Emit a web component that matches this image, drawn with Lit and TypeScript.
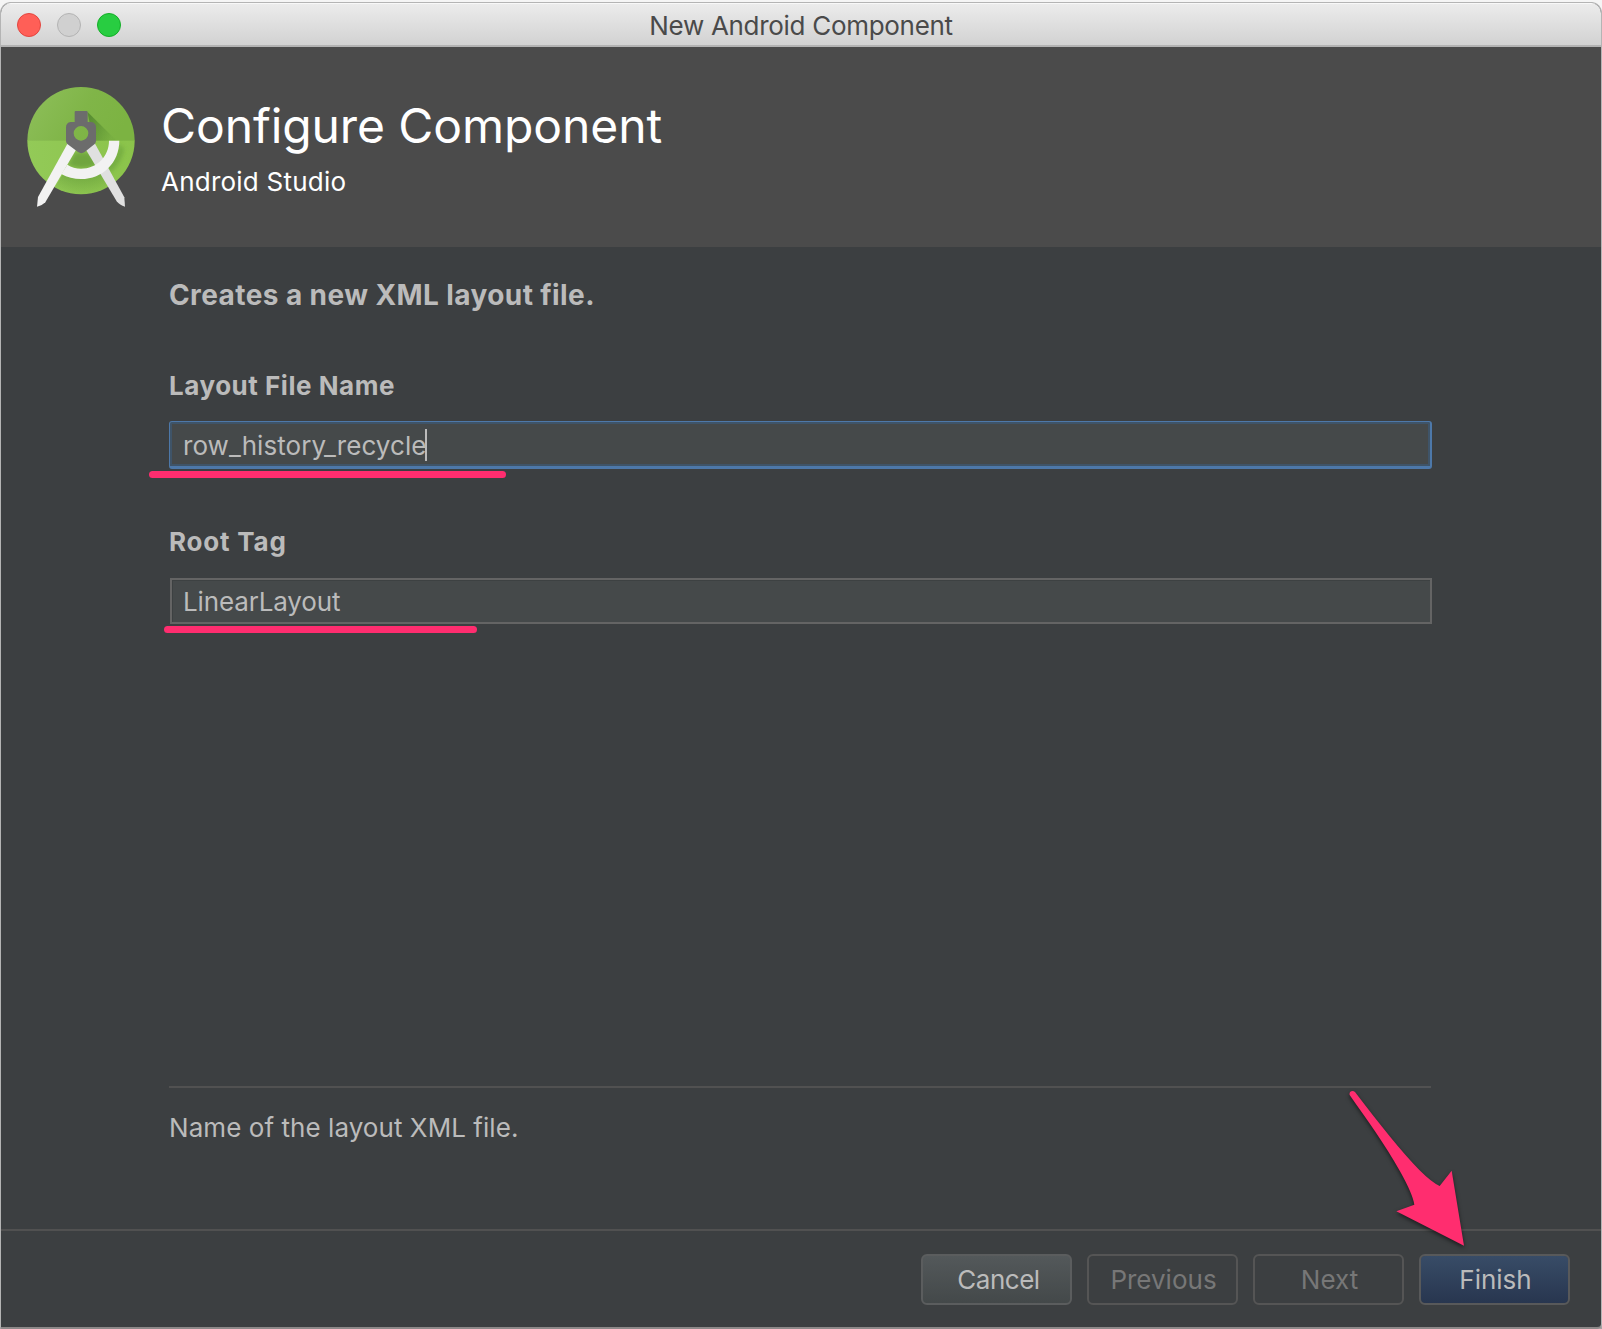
import { LitElement, html, svg, css } from "lit";
import { customElement, property } from "lit/decorators.js";
import { classMap } from "lit/directives/class-map.js";

@customElement("wizard-button")
class WizardButton extends LitElement {
  @property() label = "";
  @property() kind: "normal" | "disabled" | "primary" = "normal";

  static styles = css`
    :host { display: block; }
    .btn {
      box-sizing: border-box;
      display: flex;
      align-items: center;
      justify-content: center;
      width: 151px;
      height: 51px;
      margin: 0;
      padding: 0 0 1px 2px;
      border: 2px solid #57595a;
      border-radius: 6px;
      background: transparent;
      color: #bbbbbb;
      font: 400 26px/31px Inter, "Liberation Sans", sans-serif;
    }
    .normal { background: linear-gradient(#54595b, #434849) border-box; border-color: #5b5d5e; letter-spacing: -0.5px; padding-left: 4px; }
    .disabled { color: #777777; border-color: #555555; }
    .primary { background: linear-gradient(#384c67, #28364f) padding-box; border-color: #58595a; }
  `;

  render() {
    return html`<button
      class=${classMap({ btn: true, [this.kind]: true })}
      ?disabled=${this.kind === "disabled"}
    >${this.label}</button>`;
  }
}

@customElement("studio-logo")
class StudioLogo extends LitElement {
  static styles = css`:host, svg { display: block; }`;

  render() {
    return html`<svg width="130" height="140" viewBox="0 0 390 420">
      <defs>
        <linearGradient id="top" x1="0" y1="0" x2="1" y2="0.3">
          <stop offset="0" stop-color="#8fc05c" />
          <stop offset="0.6" stop-color="#80b548" />
          <stop offset="1" stop-color="#7cb342" />
        </linearGradient>
        <linearGradient id="low" x1="0" y1="0" x2="1" y2="0">
          <stop offset="0" stop-color="#93ca58" />
          <stop offset="1" stop-color="#8bc34a" />
        </linearGradient>
        <linearGradient id="shade" gradientUnits="userSpaceOnUse" x1="215" y1="150" x2="290" y2="185">
          <stop offset="0" stop-color="#33691e" stop-opacity="0.5" />
          <stop offset="1" stop-color="#33691e" stop-opacity="0.05" />
        </linearGradient>
        <radialGradient id="shadeLow" gradientUnits="userSpaceOnUse" cx="198" cy="200" r="160">
          <stop offset="0.3" stop-color="#33691e" stop-opacity="0.55" />
          <stop offset="1" stop-color="#33691e" stop-opacity="0.02" />
        </radialGradient>
        <clipPath id="disc"><circle cx="198" cy="197" r="161" /></clipPath>
        <filter id="soft" x="-20%" y="-20%" width="140%" height="140%"><feGaussianBlur stdDeviation="6" /></filter>
      </defs>
      <g clip-path="url(#disc)">
        <rect x="30" y="30" width="340" height="168" fill="url(#top)" />
        <rect x="30" y="197" width="340" height="170" fill="url(#low)" />
        <path d="M217 110 L305 197 H235 Z" fill="url(#shade)" />
        <path d="M180 232 L222 232 L250 268 Q200 290 158 270 Z" fill="#558b2f" fill-opacity="0.55" filter="url(#soft)" />
        <path d="M142 300 Q215 325 265 290 L310 370 H100 Z" fill="url(#shadeLow)" />
        <path d="M313 205 L328 222 Q318 270 284 294 L270 270 Q312 240 313 205 Z" fill="#558b2f" fill-opacity="0.4" filter="url(#soft)" />
      </g>
      <path d="M212 223 L239 204 L328 367 L330 395 Q314 391 305 379 Z" fill="#e0e0e0" />
      <path d="M282 197 H313 C313 262 264 312 198 312 C177 312 157 307 139 297 L157 269 C169 277 183 281 198 281 C245 281 282 244 282 197 Z" fill="#f2f2f2" />
      <path d="M159 203 L184 223 L91 382 Q82 392 66 395 L69 366 Z" fill="#f2f2f2" />
      <path fill-rule="evenodd" fill="#6c6c6c" d="M182 108 H214 Q218 108 218 112 V141 H229 Q243 143 243 157 V198 Q243 203 239 207 L209 231 Q199 238 189 231 L157 207 Q153 203 153 198 V157 Q153 143 167 141 H179 V112 Q179 108 182 108 Z M198 153 A22 22 0 1 0 198 197 A22 22 0 1 0 198 153 Z" />
    </svg>`;
  }
}

@customElement("app-root")
class AppRoot extends LitElement {
  static styles = css`
    :host {
      display: block;
      width: 1602px;
      height: 1329px;
      overflow: hidden;
      background: #f3f3f3;
      font-family: Inter, "Liberation Sans", sans-serif;
      font-size: 26px;
      line-height: 31px;
      color: #bbbbbb;
    }
    .page { box-sizing: border-box; height: 1329px; padding-top: 2px; background: linear-gradient(#f5f5f5 0 20px, #a5a3a3 60px); }
    .window {
      position: relative;
      box-sizing: border-box;
      height: 1327px;
      border: 1px solid #b4b4b4;
      border-width: 1px 1px 2px;
      border-bottom-color: #8d8989;
      border-radius: 11px 11px 5px 2px;
      background: #3c3f41;
      overflow: hidden;
      display: flex;
      flex-direction: column;
    }
    .titlebar {
      box-sizing: border-box;
      flex: none;
      display: grid;
      grid-template-columns: 1fr auto 1fr;
      height: 44px;
      background: linear-gradient(#ececec, #d2d2d2);
      box-shadow: inset 0 1px #f8f8f8;
      border-bottom: 2px solid #b3b3b3;
    }
    .lights { display: flex; gap: 16px; padding: 10px 0 0 16px; }
    .light { box-sizing: border-box; width: 24px; height: 24px; border-radius: 50%; border: 1px solid; }
    .close { background: #ff5f57; border-color: #e2463f; }
    .mini { background: #d0d0d0; border-color: #b3b3b3; }
    .zoom { background: #28cd41; border-color: #14ae28; }
    .title { padding-top: 7px; color: #4a4a4a; letter-spacing: -0.3px; white-space: nowrap; }
    .header { flex: none; height: 200px; display: flex; background: #4b4b4b; color: #ffffff; }
    .logo { padding: 28px 14px 0 14px; }
    .headings { padding: 49px 0 0 2px; }
    .h1 { font-size: 48px; line-height: 59px; letter-spacing: -0.08px; font-weight: 400; margin: 0 0 11px; }
    .sub { letter-spacing: 0.23px; }
    .form { flex: 1; display: flex; flex-direction: column; padding: 31px 168px 0; }
    .intro { font-weight: 700; font-size: 28px; line-height: 34px; letter-spacing: 0.41px; }
    .label { margin: 58px 0 20px; font-weight: 700; letter-spacing: 0.53px; }
    .label.root { margin: 57px 0 21px; letter-spacing: 0.8px; }
    .field { position: relative; box-sizing: border-box; display: flex; background: #45494a; }
    .field.focus {
      height: 48px;
      margin-right: 1px;
      border: 1px solid #4d78a9;
      border-width: 1px 2px 3px 1px;
      border-radius: 3px;
      box-shadow: inset 0 0 0 2px #3f5468;
      padding: 8px 0 0 13px;
      letter-spacing: 0.05px;
    }
    .field.plain {
      height: 46px;
      margin: 0 1px 0 1px;
      border: 2px solid #646464;
      box-shadow: inset 1px 1px #3d4142;
      padding: 6px 0 0 11px;
      letter-spacing: -0.14px;
    }
    .caret { width: 2px; height: 32px; margin: -1px 0 0 -1px; background: #bbbbbb; }
    .mark { position: absolute; height: 6.6px; border-radius: 4px; background: #ff2d6f; }
    .m1 { left: -21px; top: 49.3px; width: 357px; }
    .m2 { left: -8px; top: 46px; width: 313px; }
    .hint { margin: auto 2px 86px 0; padding-top: 24px; border-top: 2px solid #515151; letter-spacing: 0.06px; }
    .footer {
      flex: none;
      box-sizing: border-box;
      height: 98px;
      border-top: 2px solid #515151;
      padding: 23px 31px 0 0;
      display: flex;
      justify-content: flex-end;
      gap: 15px;
    }
    .arrow { position: absolute; left: 1329px; top: 1067px; filter: drop-shadow(0 2px 2px rgba(0, 0, 0, 0.55)); }
  `;

  render() {
    return html`<div class="page"><div class="window">
      <div class="titlebar">
        <div class="lights">
          ${["close", "mini", "zoom"].map((n) => html`<div class="light ${n}"></div>`)}
        </div>
        <div class="title">New Android Component</div>
        <div></div>
      </div>
      <div class="header">
        <studio-logo class="logo"></studio-logo>
        <div class="headings">
          <h1 class="h1">Configure Component</h1>
          <div class="sub">Android Studio</div>
        </div>
      </div>
      <div class="form">
        <div class="intro">Creates a new XML layout file.</div>
        <div class="label">Layout File Name</div>
        <div class="field focus">row_history_recycle<div class="caret"></div><div class="mark m1"></div></div>
        <div class="label root">Root Tag</div>
        <div class="field plain">LinearLayout<div class="mark m2"></div></div>
        <div class="hint">Name of the layout XML file.</div>
      </div>
      <div class="footer">
        <wizard-button label="Cancel"></wizard-button>
        <wizard-button label="Previous" kind="disabled"></wizard-button>
        <wizard-button label="Next" kind="disabled"></wizard-button>
        <wizard-button label="Finish" kind="primary"></wizard-button>
      </div>
      <svg class="arrow" width="160" height="190" viewBox="0 0 480 570">
        ${svg`<path fill="#ff2d6f" d="M59 75 C56 65 67 59 75 66 C150 164 215 246 268 300 Q305 337 329 348 L365 302 L402 527 L199 424 L253 404 Q248 372 210 304 C165 222 108 146 59 75 Z" />`}
      </svg>
    </div></div>`;
  }
}
